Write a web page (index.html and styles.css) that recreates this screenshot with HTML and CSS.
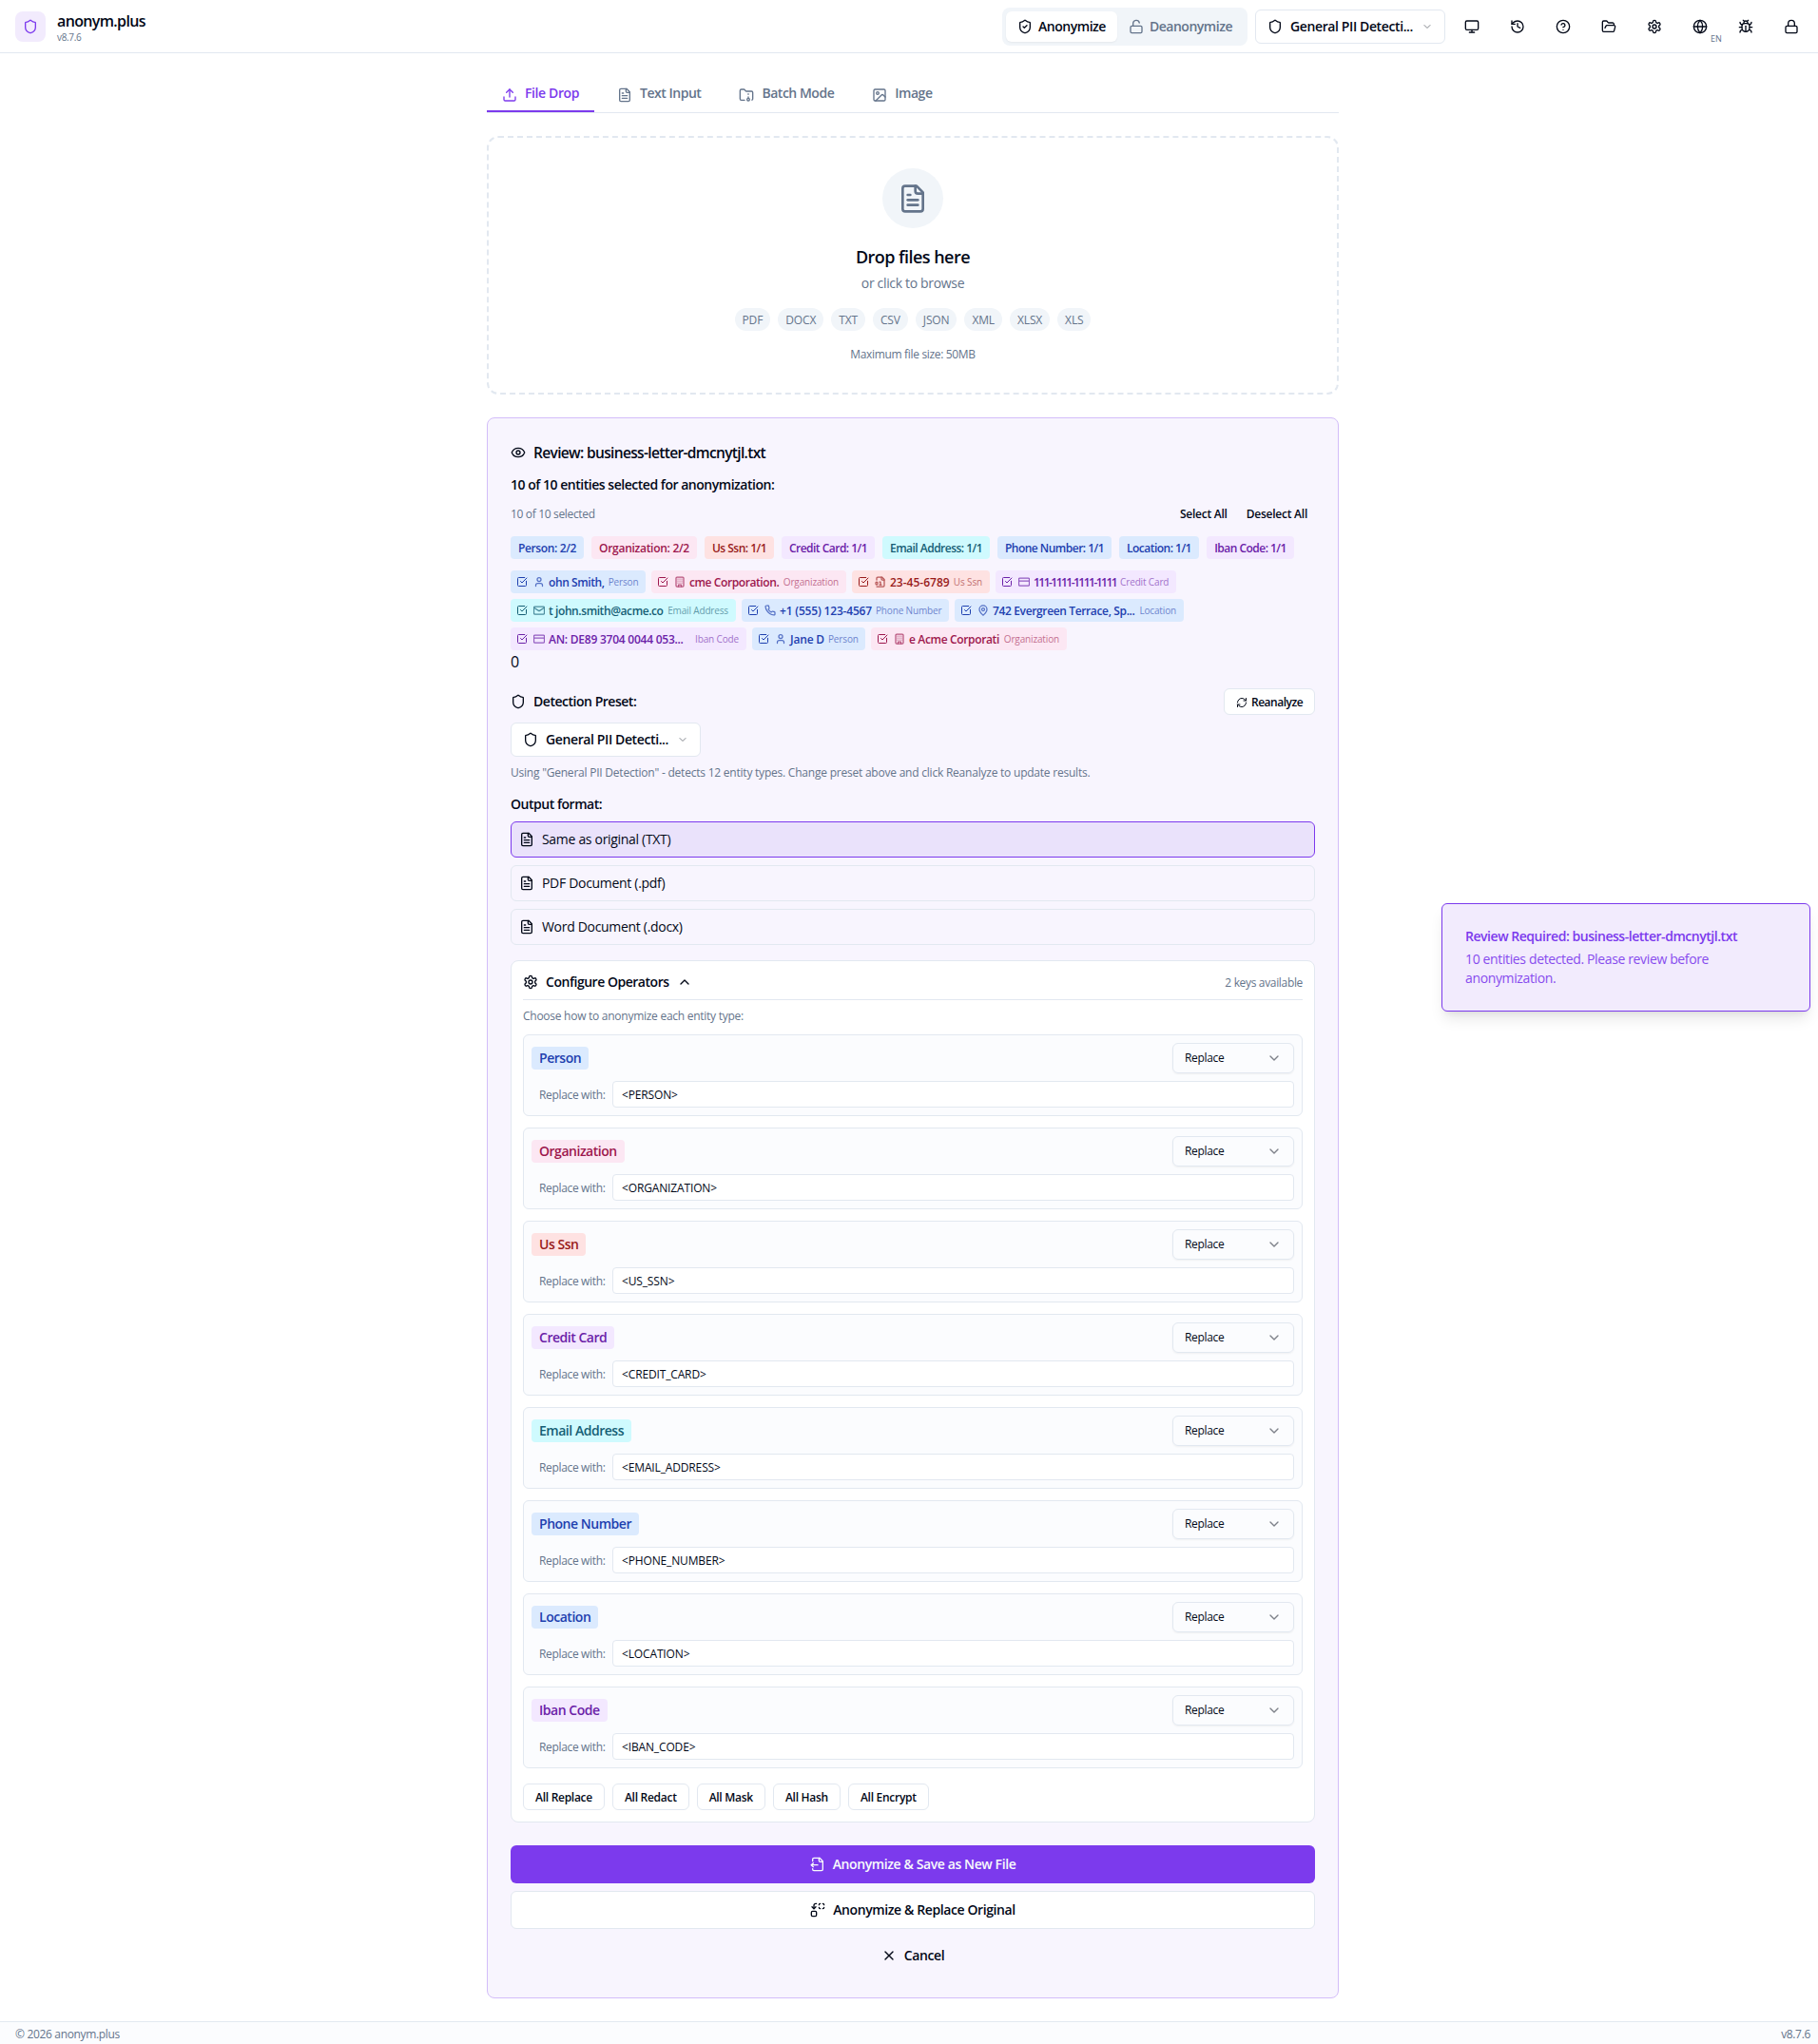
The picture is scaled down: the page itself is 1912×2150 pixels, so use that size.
FILE: index.html
```html
<!DOCTYPE html>
<html lang="en">
<head>
<meta charset="utf-8">
<title>anonym.plus</title>
<link rel="stylesheet" href="styles.css">
</head>
<body>
<svg class="sprite" aria-hidden="true">
  <symbol id="shield" viewBox="0 0 24 24"><path d="M20 13c0 5-3.5 7.5-7.66 8.95a1 1 0 0 1-.67-.01C7.5 20.5 4 18 4 13V6a1 1 0 0 1 1-1c2 0 4.5-1.2 6.24-2.72a1.17 1.17 0 0 1 1.52 0C14.51 3.81 17 5 19 5a1 1 0 0 1 1 1z"/></symbol>
  <symbol id="shield-check" viewBox="0 0 24 24"><path d="M20 13c0 5-3.5 7.5-7.66 8.95a1 1 0 0 1-.67-.01C7.5 20.5 4 18 4 13V6a1 1 0 0 1 1-1c2 0 4.5-1.2 6.24-2.72a1.17 1.17 0 0 1 1.52 0C14.51 3.81 17 5 19 5a1 1 0 0 1 1 1z"/><path d="m9 12 2 2 4-4"/></symbol>
  <symbol id="lock-open" viewBox="0 0 24 24"><rect width="18" height="11" x="3" y="11" rx="2"/><path d="M7 11V7a5 5 0 0 1 9.9-1"/></symbol>
  <symbol id="lock" viewBox="0 0 24 24"><rect width="18" height="11" x="3" y="11" rx="2"/><path d="M7 11V7a5 5 0 0 1 10 0v4"/></symbol>
  <symbol id="chevron-down" viewBox="0 0 24 24"><path d="m6 9 6 6 6-6"/></symbol>
  <symbol id="chevron-up" viewBox="0 0 24 24"><path d="m18 15-6-6-6 6"/></symbol>
  <symbol id="monitor" viewBox="0 0 24 24"><rect width="20" height="14" x="2" y="3" rx="2"/><path d="M8 21h8M12 17v4"/></symbol>
  <symbol id="history" viewBox="0 0 24 24"><path d="M3 12a9 9 0 1 0 9-9 9.75 9.75 0 0 0-6.74 2.74L3 8"/><path d="M3 3v5h5"/><path d="M12 7v5l4 2"/></symbol>
  <symbol id="help" viewBox="0 0 24 24"><circle cx="12" cy="12" r="10"/><path d="M9.09 9a3 3 0 0 1 5.83 1c0 2-3 3-3 3"/><path d="M12 17h.01"/></symbol>
  <symbol id="folder-open" viewBox="0 0 24 24"><path d="m6 14 1.5-2.9A2 2 0 0 1 9.24 10H20a2 2 0 0 1 1.94 2.5l-1.54 6a2 2 0 0 1-1.95 1.5H4a2 2 0 0 1-2-2V5a2 2 0 0 1 2-2h3.9a2 2 0 0 1 1.69.9l.81 1.2a2 2 0 0 0 1.67.9H18a2 2 0 0 1 2 2v2"/></symbol>
  <symbol id="settings" viewBox="0 0 24 24"><path d="M12.22 2h-.44a2 2 0 0 0-2 2v.18a2 2 0 0 1-1 1.73l-.43.25a2 2 0 0 1-2 0l-.15-.08a2 2 0 0 0-2.73.73l-.22.38a2 2 0 0 0 .73 2.73l.15.1a2 2 0 0 1 1 1.72v.51a2 2 0 0 1-1 1.74l-.15.09a2 2 0 0 0-.73 2.73l.22.38a2 2 0 0 0 2.73.73l.15-.08a2 2 0 0 1 2 0l.43.25a2 2 0 0 1 1 1.73V20a2 2 0 0 0 2 2h.44a2 2 0 0 0 2-2v-.18a2 2 0 0 1 1-1.73l.43-.25a2 2 0 0 1 2 0l.15.08a2 2 0 0 0 2.73-.73l.22-.39a2 2 0 0 0-.73-2.73l-.15-.08a2 2 0 0 1-1-1.74v-.5a2 2 0 0 1 1-1.74l.15-.09a2 2 0 0 0 .73-2.73l-.22-.38a2 2 0 0 0-2.73-.73l-.15.08a2 2 0 0 1-2 0l-.43-.25a2 2 0 0 1-1-1.73V4a2 2 0 0 0-2-2z"/><circle cx="12" cy="12" r="3"/></symbol>
  <symbol id="globe" viewBox="0 0 24 24"><circle cx="12" cy="12" r="10"/><path d="M12 2a14.5 14.5 0 0 0 0 20 14.5 14.5 0 0 0 0-20"/><path d="M2 12h20"/></symbol>
  <symbol id="bug" viewBox="0 0 24 24"><path d="m8 2 1.88 1.88"/><path d="M14.12 3.88 16 2"/><path d="M9 7.13v-1a3.003 3.003 0 1 1 6 0v1"/><path d="M12 20c-3.3 0-6-2.7-6-6v-3a4 4 0 0 1 4-4h4a4 4 0 0 1 4 4v3c0 3.3-2.7 6-6 6"/><path d="M12 20v-9"/><path d="M6.53 9C4.6 8.8 3 7.1 3 5"/><path d="M6 13H2"/><path d="M3 21c0-2.1 1.7-3.9 3.8-4"/><path d="M20.97 5c0 2.1-1.6 3.8-3.5 4"/><path d="M22 13h-4"/><path d="M17.2 17c2.1.1 3.8 1.9 3.8 4"/></symbol>
  <symbol id="upload" viewBox="0 0 24 24"><path d="M21 15v4a2 2 0 0 1-2 2H5a2 2 0 0 1-2-2v-4"/><path d="m17 8-5-5-5 5"/><path d="M12 3v12"/></symbol>
  <symbol id="file-text" viewBox="0 0 24 24"><path d="M15 2H6a2 2 0 0 0-2 2v16a2 2 0 0 0 2 2h12a2 2 0 0 0 2-2V7Z"/><path d="M14 2v4a2 2 0 0 0 2 2h4"/><path d="M10 9H8"/><path d="M16 13H8"/><path d="M16 17H8"/></symbol>
  <symbol id="folder-archive" viewBox="0 0 24 24"><circle cx="15" cy="19" r="2"/><path d="M20.9 19.8A2 2 0 0 0 22 18V8a2 2 0 0 0-2-2h-7.9a2 2 0 0 1-1.69-.9L9.6 3.9A2 2 0 0 0 7.93 3H4a2 2 0 0 0-2 2v13a2 2 0 0 0 2 2h5.1"/><path d="M15 11v-1"/><path d="M15 17v-2"/></symbol>
  <symbol id="image" viewBox="0 0 24 24"><rect width="18" height="18" x="3" y="3" rx="2"/><circle cx="9" cy="9" r="2"/><path d="m21 15-3.086-3.086a2 2 0 0 0-2.828 0L6 21"/></symbol>
  <symbol id="eye" viewBox="0 0 24 24"><path d="M2.062 12.348a1 1 0 0 1 0-.696 10.75 10.75 0 0 1 19.876 0 1 1 0 0 1 0 .696 10.75 10.75 0 0 1-19.876 0"/><circle cx="12" cy="12" r="3"/></symbol>
  <symbol id="check" viewBox="0 0 24 24"><path d="M21 10.5V19a2 2 0 0 1-2 2H5a2 2 0 0 1-2-2V5a2 2 0 0 1 2-2h12.5"/><path d="m9 11 3 3L22 4"/></symbol>
  <symbol id="user" viewBox="0 0 24 24"><path d="M19 21v-2a4 4 0 0 0-4-4H9a4 4 0 0 0-4 4v2"/><circle cx="12" cy="7" r="4"/></symbol>
  <symbol id="building" viewBox="0 0 24 24"><rect width="16" height="20" x="4" y="2" rx="2"/><path d="M9 22v-4h6v4"/><path d="M8 6h.01M16 6h.01M12 6h.01M12 10h.01M12 14h.01M16 10h.01M16 14h.01M8 10h.01M8 14h.01"/></symbol>
  <symbol id="file-digit" viewBox="0 0 24 24"><path d="M4 22h14a2 2 0 0 0 2-2V7l-5-5H6a2 2 0 0 0-2 2v4"/><path d="M14 2v4a2 2 0 0 0 2 2h4"/><rect width="4" height="6" x="2" y="12" rx="2"/><path d="M10 12h2v6"/><path d="M10 18h4"/></symbol>
  <symbol id="card" viewBox="0 0 24 24"><rect width="22" height="16" x="1" y="4" rx="2"/><path d="M1 10h22"/></symbol>
  <symbol id="mail" viewBox="0 0 24 24"><rect width="22" height="16" x="1" y="4" rx="2"/><path d="m22 7-8.97 5.7a1.94 1.94 0 0 1-2.06 0L2 7"/></symbol>
  <symbol id="phone" viewBox="0 0 24 24"><path d="M22 16.92v3a2 2 0 0 1-2.18 2 19.79 19.79 0 0 1-8.63-3.07 19.5 19.5 0 0 1-6-6 19.79 19.79 0 0 1-3.07-8.67A2 2 0 0 1 4.11 2h3a2 2 0 0 1 2 1.72 12.84 12.84 0 0 0 .7 2.81 2 2 0 0 1-.45 2.11L8.09 9.91a16 16 0 0 0 6 6l1.27-1.27a2 2 0 0 1 2.11-.45 12.84 12.84 0 0 0 2.81.7A2 2 0 0 1 22 16.92z"/></symbol>
  <symbol id="pin" viewBox="0 0 24 24"><path d="M20 10c0 4.993-5.539 10.193-7.399 11.799a1 1 0 0 1-1.202 0C9.539 20.193 4 14.993 4 10a8 8 0 0 1 16 0"/><circle cx="12" cy="10" r="3"/></symbol>
  <symbol id="refresh" viewBox="0 0 24 24"><path d="M3 12a9 9 0 0 1 9-9 9.75 9.75 0 0 1 6.74 2.74L21 8"/><path d="M21 3v5h-5"/><path d="M21 12a9 9 0 0 1-9 9 9.75 9.75 0 0 1-6.74-2.74L3 16"/><path d="M8 16H3v5"/></symbol>
  <symbol id="file-output" viewBox="0 0 24 24"><path d="M14 2v4a2 2 0 0 0 2 2h4"/><path d="M4 7V4a2 2 0 0 1 2-2h9l5 5v13a2 2 0 0 1-2 2H6a2 2 0 0 1-2-2v-1"/><path d="m5 10-3 3 3 3"/><path d="M2 13h10"/></symbol>
  <symbol id="replace" viewBox="0 0 24 24"><path d="M14 4a2 2 0 0 1 2-2"/><path d="M20 2a2 2 0 0 1 2 2"/><path d="M22 8a2 2 0 0 1-2 2"/><path d="M16 10a2 2 0 0 1-2-2"/><path d="m3 7 3 3 3-3"/><path d="M6 10V5a3 3 0 0 1 3-3h1"/><rect width="8" height="8" x="2" y="14" rx="2"/></symbol>
  <symbol id="x" viewBox="0 0 24 24"><path d="M18 6 6 18"/><path d="m6 6 12 12"/></symbol>
</svg>

<header class="topbar">
  <div class="brand">
    <span class="logo"><svg class="icon"><use href="#shield"/></svg></span>
    <div><div class="brand-name">anonym.plus</div><div class="brand-version">v8.7.6</div></div>
  </div>
  <nav class="tools">
    <div class="mode">
      <button class="mode-btn mode-on"><svg class="icon"><use href="#shield-check"/></svg>Anonymize</button>
      <button class="mode-btn"><svg class="icon"><use href="#lock-open"/></svg>Deanonymize</button>
    </div>
    <button class="preset"><svg class="icon"><use href="#shield"/></svg><span>General PII Detecti...</span><svg class="icon chev"><use href="#chevron-down"/></svg></button>
    <button class="tool"><svg class="icon"><use href="#monitor"/></svg></button>
    <button class="tool"><svg class="icon"><use href="#history"/></svg></button>
    <button class="tool"><svg class="icon"><use href="#help"/></svg></button>
    <button class="tool"><svg class="icon"><use href="#folder-open"/></svg></button>
    <button class="tool"><svg class="icon"><use href="#settings"/></svg></button>
    <button class="tool"><svg class="icon"><use href="#globe"/></svg><span class="lang">EN</span></button>
    <button class="tool"><svg class="icon"><use href="#bug"/></svg></button>
    <button class="tool"><svg class="icon"><use href="#lock"/></svg></button>
  </nav>
</header>

<main class="page">
  <nav class="tabs">
    <a class="tab tab-on"><svg class="icon"><use href="#upload"/></svg><span>File Drop</span></a>
    <a class="tab"><svg class="icon"><use href="#file-text"/></svg><span>Text Input</span></a>
    <a class="tab"><svg class="icon"><use href="#folder-archive"/></svg><span>Batch Mode</span></a>
    <a class="tab"><svg class="icon"><use href="#image"/></svg><span>Image</span></a>
  </nav>

  <section class="dropzone">
    <span class="drop-icon"><svg class="icon"><use href="#file-text"/></svg></span>
    <h3>Drop files here</h3>
    <p class="drop-sub">or click to browse</p>
    <div class="formats"><span>PDF</span><span>DOCX</span><span>TXT</span><span>CSV</span><span>JSON</span><span>XML</span><span>XLSX</span><span>XLS</span></div>
    <p class="drop-max">Maximum file size: 50MB</p>
  </section>

  <section class="review">
    <h3 class="review-title"><svg class="icon"><use href="#eye"/></svg>Review: business-letter-dmcnytjl.txt</h3>
    <p class="label review-label">10 of 10 entities selected for anonymization:</p>
    <div class="select-row">
      <span class="muted">10 of 10 selected</span>
      <div class="select-btns"><button>Select All</button><button>Deselect All</button></div>
    </div>
    <div class="counts">
      <span class="blue">Person: 2/2</span><span class="pink">Organization: 2/2</span><span class="red">Us Ssn: 1/1</span><span class="purple">Credit Card: 1/1</span><span class="cyan">Email Address: 1/1</span><span class="blue">Phone Number: 1/1</span><span class="blue">Location: 1/1</span><span class="purple">Iban Code: 1/1</span>
    </div>
    <div class="chips">
      <span class="chip blue c-smith"><svg class="icon tick"><use href="#check"/></svg><svg class="icon kind"><use href="#user"/></svg><b>ohn Smith,</b><i>Person</i></span>
      <span class="chip pink c-acme"><svg class="icon tick"><use href="#check"/></svg><svg class="icon kind"><use href="#building"/></svg><b>cme Corporation.</b><i>Organization</i></span>
      <span class="chip red c-ssn"><svg class="icon tick"><use href="#check"/></svg><svg class="icon kind"><use href="#file-digit"/></svg><b>23-45-6789</b><i>Us Ssn</i></span>
      <span class="chip purple c-card"><svg class="icon tick"><use href="#check"/></svg><svg class="icon kind"><use href="#card"/></svg><b>111-1111-1111-1111</b><i>Credit Card</i></span>
      <span class="chip cyan c-mail"><svg class="icon tick"><use href="#check"/></svg><svg class="icon kind"><use href="#mail"/></svg><b>t john.smith@acme.co</b><i>Email Address</i></span>
      <span class="chip blue c-phone"><svg class="icon tick"><use href="#check"/></svg><svg class="icon kind"><use href="#phone"/></svg><b>+1 (555) 123-4567</b><i>Phone Number</i></span>
      <span class="chip blue c-addr"><svg class="icon tick"><use href="#check"/></svg><svg class="icon kind"><use href="#pin"/></svg><b>742 Evergreen Terrace, Sp...</b><i>Location</i></span>
      <span class="chip purple c-iban"><svg class="icon tick"><use href="#check"/></svg><svg class="icon kind"><use href="#card"/></svg><b>AN: DE89 3704 0044 053...</b><i>Iban Code</i></span>
      <span class="chip blue c-jane"><svg class="icon tick"><use href="#check"/></svg><svg class="icon kind"><use href="#user"/></svg><b>Jane D</b><i>Person</i></span>
      <span class="chip pink c-corp"><svg class="icon tick"><use href="#check"/></svg><svg class="icon kind"><use href="#building"/></svg><b>e Acme Corporati</b><i>Organization</i></span>
    </div>
    <div class="zero">0</div>

    <div class="preset-head">
      <span class="label with-icon"><svg class="icon"><use href="#shield"/></svg>Detection Preset:</span>
      <button class="btn-sm reanalyze"><svg class="icon"><use href="#refresh"/></svg>Reanalyze</button>
    </div>
    <button class="preset"><svg class="icon"><use href="#shield"/></svg><span>General PII Detecti...</span><svg class="icon chev"><use href="#chevron-down"/></svg></button>
    <p class="muted preset-help">Using "General PII Detection" - detects 12 entity types. Change preset above and click Reanalyze to update results.</p>

    <p class="label">Output format:</p>
    <div class="outputs">
      <div class="output output-on"><svg class="icon"><use href="#file-text"/></svg>Same as original (TXT)</div>
      <div class="output"><svg class="icon"><use href="#file-text"/></svg>PDF Document (.pdf)</div>
      <div class="output"><svg class="icon"><use href="#file-text"/></svg>Word Document (.docx)</div>
    </div>

    <div class="config">
      <div class="config-head">
        <span class="label with-icon"><svg class="icon"><use href="#settings"/></svg>Configure Operators<svg class="icon"><use href="#chevron-up"/></svg></span>
        <span class="muted">2 keys available</span>
      </div>
      <p class="muted config-help">Choose how to anonymize each entity type:</p>
      <div class="ops">
        <div class="op"><div class="op-top"><span class="badge blue">Person</span><span class="select">Replace<svg class="icon"><use href="#chevron-down"/></svg></span></div><div class="op-field"><span>Replace with:</span><span class="input">&lt;PERSON&gt;</span></div></div>
        <div class="op"><div class="op-top"><span class="badge pink">Organization</span><span class="select">Replace<svg class="icon"><use href="#chevron-down"/></svg></span></div><div class="op-field"><span>Replace with:</span><span class="input">&lt;ORGANIZATION&gt;</span></div></div>
        <div class="op"><div class="op-top"><span class="badge red">Us Ssn</span><span class="select">Replace<svg class="icon"><use href="#chevron-down"/></svg></span></div><div class="op-field"><span>Replace with:</span><span class="input">&lt;US_SSN&gt;</span></div></div>
        <div class="op"><div class="op-top"><span class="badge purple">Credit Card</span><span class="select">Replace<svg class="icon"><use href="#chevron-down"/></svg></span></div><div class="op-field"><span>Replace with:</span><span class="input">&lt;CREDIT_CARD&gt;</span></div></div>
        <div class="op"><div class="op-top"><span class="badge cyan">Email Address</span><span class="select">Replace<svg class="icon"><use href="#chevron-down"/></svg></span></div><div class="op-field"><span>Replace with:</span><span class="input">&lt;EMAIL_ADDRESS&gt;</span></div></div>
        <div class="op"><div class="op-top"><span class="badge blue">Phone Number</span><span class="select">Replace<svg class="icon"><use href="#chevron-down"/></svg></span></div><div class="op-field"><span>Replace with:</span><span class="input">&lt;PHONE_NUMBER&gt;</span></div></div>
        <div class="op"><div class="op-top"><span class="badge blue">Location</span><span class="select">Replace<svg class="icon"><use href="#chevron-down"/></svg></span></div><div class="op-field"><span>Replace with:</span><span class="input">&lt;LOCATION&gt;</span></div></div>
        <div class="op"><div class="op-top"><span class="badge purple">Iban Code</span><span class="select">Replace<svg class="icon"><use href="#chevron-down"/></svg></span></div><div class="op-field"><span>Replace with:</span><span class="input">&lt;IBAN_CODE&gt;</span></div></div>
      </div>
      <div class="bulk"><button class="btn-sm">All Replace</button><button class="btn-sm">All Redact</button><button class="btn-sm">All Mask</button><button class="btn-sm">All Hash</button><button class="btn-sm">All Encrypt</button></div>
    </div>

    <div class="actions">
      <button class="action primary"><svg class="icon"><use href="#file-output"/></svg>Anonymize &amp; Save as New File</button>
      <button class="action outline"><svg class="icon"><use href="#replace"/></svg>Anonymize &amp; Replace Original</button>
      <button class="action"><svg class="icon"><use href="#x"/></svg>Cancel</button>
    </div>
  </section>
</main>

<footer class="footer"><span>© 2026 anonym.plus</span><span>v8.7.6</span></footer>

<aside class="toast">
  <div class="toast-title">Review Required: business-letter-dmcnytjl.txt</div>
  <div class="toast-text">10 entities detected. Please review before anonymization.</div>
</aside>
</body>
</html>
```
FILE: styles.css
```css
* { box-sizing: border-box; margin: 0; padding: 0; }

body {
  min-height: 2150px;
  display: flex;
  flex-direction: column;
  background: #fff;
  color: #020817;
  font: 400 14px/20px "Open Sans", "Noto Sans", sans-serif;
  letter-spacing: -.024em;
}

button { border: 0; background: none; color: inherit; font: inherit; letter-spacing: inherit; white-space: nowrap; }
.sprite { display: none; }
.icon { width: 16px; height: 16px; flex: none; fill: none; stroke: currentColor; stroke-width: 2; stroke-linecap: round; stroke-linejoin: round; overflow: visible; }
.muted { color: #64748b; font-size: 12px; line-height: 16px; }
.label { font-weight: 600; letter-spacing: -.034em; }
.with-icon { display: flex; align-items: center; gap: 8px; }

.blue { background: #dbeafe; color: #1e40af; }
.pink { background: #fce7f3; color: #9d174d; }
.red { background: #fee2e2; color: #991b1b; }
.purple { background: #f3e8ff; color: #6b21a8; }
.cyan { background: #cffafe; color: #155e75; }

/* Header */
.topbar { height: 56px; padding: 0 8px 0 16px; border-bottom: 1px solid #e2e8f0; display: flex; align-items: center; justify-content: space-between; }
.brand { display: flex; align-items: center; gap: 12px; }
.logo { width: 32px; height: 32px; border-radius: 8px; background: #f2ebfd; color: #7c3aed; display: grid; place-items: center; }
.brand-name { padding-top: 2px; font-size: 16px; line-height: 20px; font-weight: 600; letter-spacing: -.04em; }
.brand-version { font-size: 10px; line-height: 14px; color: #64748b; }
.tools { display: flex; align-items: center; gap: 8px; font-weight: 600; letter-spacing: -.034em; }
.mode { display: flex; height: 40px; padding: 4px; border-radius: 8px; background: #f1f5f9; color: #64748b; }
.mode-btn { height: 32px; padding: 0 12px; display: flex; align-items: center; gap: 6px; border-radius: 6px; }
.mode-on { background: #fff; color: #020817; box-shadow: 0 1px 2px rgb(0 0 0 / .05); }
.preset { width: 200px; height: 36px; padding: 0 12px; border: 1px solid #e2e8f0; border-radius: 6px; background: #fff; display: flex; align-items: center; gap: 8px; font-weight: 600; letter-spacing: -.0276em; }
.preset .chev { width: 12px; height: 12px; margin-left: auto; opacity: .5; }
.tool { position: relative; width: 40px; height: 36px; display: grid; place-items: center; }
.lang { position: absolute; left: 31px; top: 25px; font-size: 9px; line-height: 12px; font-weight: 400; color: #64748b; letter-spacing: 0; }

/* Page */
.page { width: 904px; margin: 0 auto; padding: 24px 0 0 8px; flex: 1; }
.tabs { display: flex; gap: 8px; height: 39px; border-bottom: 1px solid #e2e8f0; color: #64748b; font-weight: 600; letter-spacing: -.034em; }
.tab { height: 38px; padding: 8px 16px 0; display: flex; gap: 8px; border-bottom: 2px solid transparent; }
.tab .icon { margin-top: 4px; }
.tab-on { color: #7c3aed; border-color: #7c3aed; letter-spacing: -.028em; }

.dropzone { margin-top: 24px; height: 272px; padding: 32px; border: 2px dashed #e2e8f0; border-radius: 12px; display: flex; flex-direction: column; align-items: center; }
.drop-icon { width: 64px; height: 64px; border-radius: 50%; background: #f1f5f9; color: #64748b; display: grid; place-items: center; }
.drop-icon .icon { width: 32px; height: 32px; }
.dropzone h3 { margin-top: 16px; font-size: 18px; line-height: 28px; font-weight: 600; letter-spacing: -.03em; }
.drop-sub { margin-top: 4px; color: #64748b; }
.formats { margin-top: 16px; display: flex; gap: 8px; font-size: 12px; line-height: 23px; color: #64748b; letter-spacing: -.012em; }
.formats span { height: 24px; padding: 1px 8px 0; border-radius: 12px; background: #f1f5f9; }
.drop-max { margin-top: 17px; font-size: 12px; line-height: 16px; color: #64748b; }

/* Review card */
.review { margin: 24px 0; height: 1663px; padding: 24px; border: 1px solid #d3bdf9; border-radius: 8px; background: #f8f5fe; }
.review-title { display: flex; align-items: center; gap: 8px; font-size: 15.5px; line-height: 24px; font-weight: 600; letter-spacing: -.0425em; }
.review-label { margin-top: 12px; }
.select-row { margin-top: 9px; height: 24px; display: flex; align-items: center; justify-content: space-between; }
.select-btns { display: flex; gap: 4px; font-size: 12px; font-weight: 600; letter-spacing: -.02em; }
.select-btns button { padding: 0 8px; }
.counts { margin-top: 11px; display: flex; gap: 8px; font-size: 12px; line-height: 23px; font-weight: 600; letter-spacing: -.043em; }
.counts span { height: 24px; padding-top: 1px; border-radius: 4px; text-align: center; white-space: nowrap; }
.counts span:nth-child(1) { width: 77px; letter-spacing: -.031em; }
.counts span:nth-child(2) { width: 111px; letter-spacing: -.024em; }
.counts span:nth-child(3) { width: 73px; }
.counts span:nth-child(4) { width: 98px; }
.counts span:nth-child(5) { width: 113px; }
.counts span:nth-child(6) { width: 120px; }
.counts span:nth-child(7) { width: 84px; }
.counts span:nth-child(8) { width: 92px; }

.chips { margin-top: 12px; display: flex; flex-wrap: wrap; gap: 6px; font-size: 12px; line-height: 23px; }
.chip { height: 24px; padding: 0 8px 0 6px; border-radius: 4px; display: flex; align-items: center; justify-content: space-between; white-space: nowrap; }
.chip .tick { width: 12px; height: 12px; }
.chip .kind { width: 12px; height: 12px; margin-left: 6px; opacity: .7; stroke-width: 2.5; }
.chip b { font-weight: 600; margin-left: 4px; margin-right: auto; padding-top: 1px; letter-spacing: -.034em; }
.chip i { font-style: normal; font-size: 10px; opacity: .6; margin-left: 4px; padding-top: 1px; letter-spacing: -.015em; }
.c-smith { width: 142px; }
.c-acme { width: 205px; }
.c-ssn { width: 145px; }
.c-ssn b { letter-spacing: 0; }
.c-card { width: 190px; }
.c-card b { letter-spacing: -.127em; }
.c-mail { width: 237px; }
.c-phone { width: 218px; }
.c-phone b { letter-spacing: -.015em; }
.c-addr { width: 241px; }
.c-addr b { letter-spacing: -.03em; }
.c-iban { width: 248px; }
.c-iban b { letter-spacing: -.02em; }
.c-jane { width: 119px; }
.c-jane b { letter-spacing: -.014em; }
.c-corp { width: 206px; }
.c-corp b { letter-spacing: -.029em; }
.zero { font-size: 16px; line-height: 24px; }

.preset-head { margin-top: 16px; height: 28px; display: flex; align-items: center; justify-content: space-between; }
.btn-sm { height: 28px; padding: 1px 12px 0; border: 1px solid #e2e8f0; border-radius: 6px; background: #fff; font-size: 12px; line-height: 16px; font-weight: 600; letter-spacing: -.023em; }
.reanalyze { width: 96px; display: flex; align-items: center; gap: 4px; letter-spacing: -.04em; }
.reanalyze .icon { width: 12px; height: 12px; }
.review > .preset { margin-top: 8px; }
.preset-help { margin: 9px 0 15px; letter-spacing: -.0185em; }
.outputs { margin-top: 8px; display: grid; gap: 8px; }
.output { height: 38px; padding: 0 8px; border: 1px solid #e2e8f0; border-radius: 6px; display: flex; align-items: center; gap: 8px; letter-spacing: -.022em; }
.output-on { border-color: #7c3aed; background: #eae2fb; }

/* Operator settings */
.config { margin-top: 16px; height: 907px; padding: 12px; border: 1px solid #e2e8f0; border-radius: 8px; background: #fff; }
.config-head { height: 29px; padding-bottom: 8px; border-bottom: 1px solid #e2e8f0; display: flex; align-items: center; justify-content: space-between; }
.config-head .muted { padding-top: 1px; }
.config-help { margin: 9px 0 11px; letter-spacing: -.022em; }
.ops { display: grid; gap: 12px; }
.op { height: 86px; padding: 8px; border: 1px solid #e2e8f0; border-radius: 6px; background: #fbfcfe; display: flex; flex-direction: column; gap: 8px; }
.op-top { display: flex; align-items: center; justify-content: space-between; }
.badge { padding: 2px 8px; border-radius: 4px; font-weight: 600; letter-spacing: -.034em; }
.select { width: 128px; height: 32px; padding: 0 12px; border: 1px solid #e2e8f0; border-radius: 6px; box-shadow: 0 1px 2px rgb(0 0 0 / .05); display: flex; align-items: center; justify-content: space-between; font-size: 12px; line-height: 30px; }
.select .icon { opacity: .5; }
.op-field { padding-left: 8px; display: flex; align-items: center; font-size: 12px; color: #64748b; }
.op-field > :first-child { width: 77px; padding-top: 1px; }
.input { flex: 1; height: 28px; padding: 1px 9px 0; border: 1px solid #e2e8f0; border-radius: 4px; background: #fff; color: #020817; line-height: 26px; letter-spacing: -.012em; }
.bulk { margin-top: 16px; display: flex; gap: 8px; }

.actions { margin-top: 24px; display: grid; gap: 8px; }
.action { height: 40px; border-radius: 6px; display: flex; align-items: center; justify-content: center; gap: 8px; font-weight: 600; letter-spacing: -.028em; }
.primary { background: #7c3aed; color: #f8fafc; }
.outline { border: 1px solid #e2e8f0; background: #fff; }

.footer { height: 24px; padding: 3px 8px 0 16px; border-top: 1px solid #e2e8f0; background: #fbfcfe; color: #64748b; display: flex; justify-content: space-between; font-size: 12px; line-height: 20px; }

/* Notification floating over the page */
.toast { position: absolute; left: 1516px; top: 950px; width: 388px; height: 114px; padding: 24px; border: 1px solid #7c3aed; border-radius: 6px; background: #f2ebfd; color: #7c3aed; box-shadow: 0 10px 15px -3px rgb(0 0 0 / .1), 0 4px 6px -4px rgb(0 0 0 / .1); }
.toast-title { font-weight: 600; letter-spacing: -.033em; white-space: nowrap; }
.toast-text { width: 280px; margin-top: 4px; opacity: .9; letter-spacing: -.026em; }
```
